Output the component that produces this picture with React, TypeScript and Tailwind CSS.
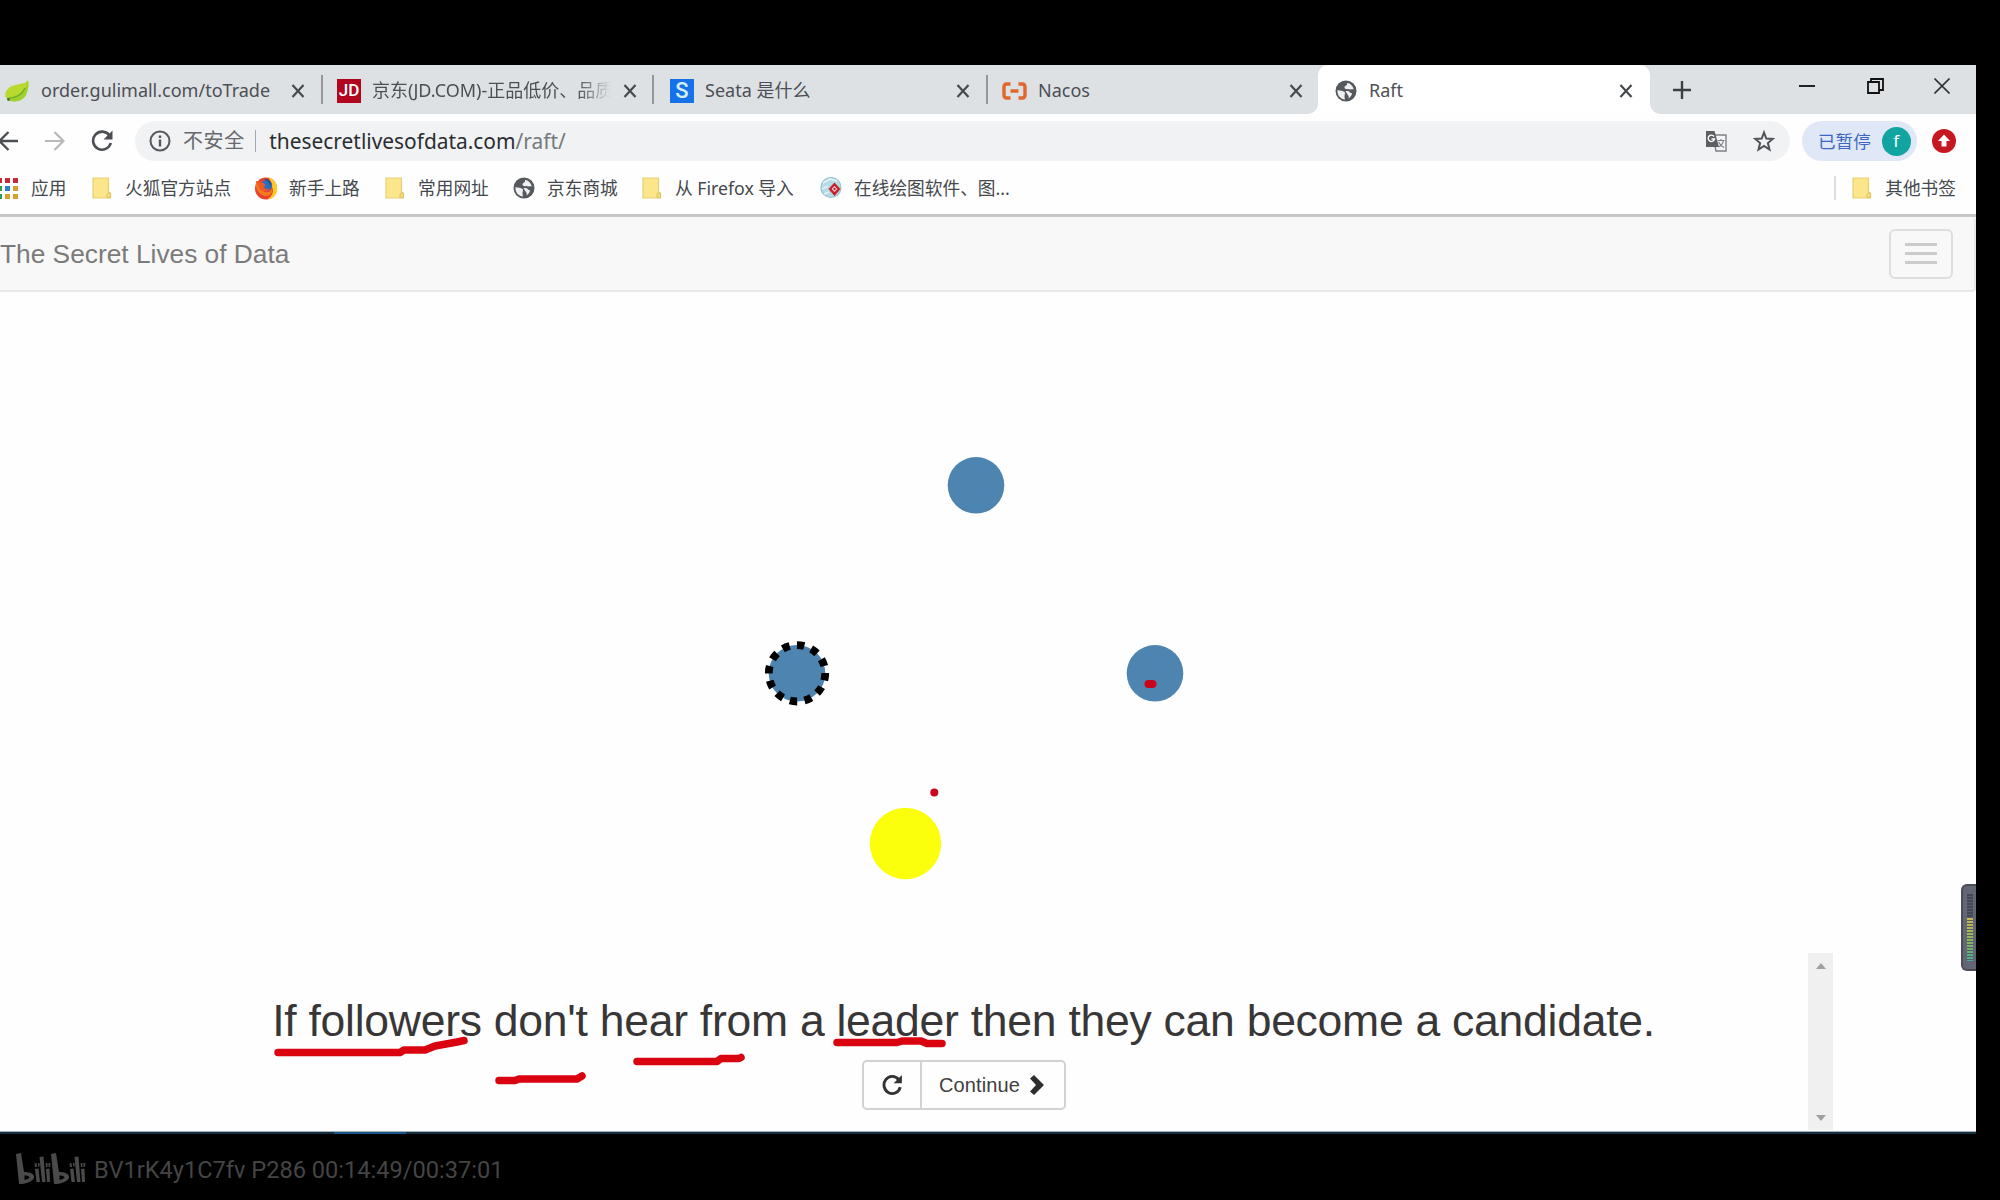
import React from "react";

const cjk = "font-['Noto_Sans','Noto_Sans_CJK_SC',sans-serif]";

function Close({ className = "" }: { className?: string }) {
  return (
    <svg viewBox="0 0 14 14" className={"size-3.5 shrink-0 " + className}>
      <path d="M1.5 1l11 12M12.5 1l-11 12" stroke="#46494d" strokeWidth="2.2" fill="none" />
    </svg>
  );
}

function Leaf() {
  return (
    <svg viewBox="0 0 24 24" className="w-6 h-6 shrink-0">
      <path d="M23 1C20 6 12 4 5 8C-1 12 -1 18 3 21C9 24 18 22 21 16C23 11 24 6 23 1Z" fill="#b9d92f" />
      <path d="M3 21C9 24 18 22 21 16C23 11 24 6 23 1C22 9 18 16 4 18Z" fill="#9fd02f" />
      <path d="M2 19.500C10 19.500 17 16 20 9" stroke="#6ba92b" strokeWidth="1.200" fill="none" />
      <circle cx="3.500" cy="20.500" r="1.400" fill="#3f7a2a" />
    </svg>
  );
}

function Globe({ className = "" }: { className?: string }) {
  return (
    <svg viewBox="0 0 22 22" className={"size-[22px] shrink-0 " + className}>
      <circle cx="11" cy="11" r="10.500" fill="#55595d" />
      <path d="M2.500 10C5 11 8 10.500 9.500 12C11 13.500 8.500 14.500 10 19.500C5 19 2 15 2.500 10Z" fill="#eef0f2" />
      <path d="M12 3C14 2.500 18 5.500 18.800 9.500C17 9 15 10 13.500 9C11 9.500 9 8.500 9.500 7C10 5.500 12.500 6 12 3Z" fill="#eef0f2" />
      <path d="M10.500 11.500C13 10.500 15 11.500 15 13C18 12 17.500 15.500 13.500 18.500C14.500 15.500 12.500 15 12 13.500Z" fill="#eef0f2" />
    </svg>
  );
}

function Folder() {
  return (
    <svg viewBox="0 0 20 22" className="w-5 h-[22px] shrink-0">
      <path d="M1 1H16.500V15L18.500 16V21H1Z" fill="#fce68c" stroke="#e6cf76" strokeWidth="1.200" />
      <path d="M15 20.500V17C15 15.500 18.500 15.500 18.500 17V20.500Z" fill="#f7dc76" stroke="#dcc262" strokeWidth="1" />
    </svg>
  );
}

function Firefox() {
  return (
    <svg viewBox="0 0 24 24" className="size-6 shrink-0">
      <circle cx="12" cy="12.500" r="11" fill="#e8412c" />
      <path d="M14 1C21 3 24 9 23 15C22 20 18 23 13 23.500C19 20 20 15 18 11C19 8 16 4 14 1Z" fill="#ffc928" />
      <path d="M2 5C1 11 4 20 12 20C17 20 19 16 18 12C17 17 12 17 9 15C6 13 6 9 8 7Z" fill="#f5791f" />
      <circle cx="12.500" cy="9.500" r="5.500" fill="#2a6fc0" />
      <path d="M10 3C13 2 18 5 17 11C16 7 13 5 10 3Z" fill="#274b91" />
      <path d="M2 5C4 6 6 6 9 7C12 8 12 10 9.500 11C11 13 14 13 16 13C13 16 7 16 5 12Z" fill="#ee5a24" />
    </svg>
  );
}

function Drawing() {
  return (
    <svg viewBox="0 0 22 24" className="w-[22px] h-6 shrink-0">
      <circle cx="11" cy="11.500" r="10" fill="#b4dbe6" stroke="#9cc3d0" strokeWidth="1.200" />
      <path d="M3 7L10 3L17 5M2 13L8 10M4 18L9 16" stroke="#e4f3f7" strokeWidth="1.500" fill="none" />
      <path d="M14.500 6.500L20.500 13L14.500 20L8.500 13Z" fill="#c9202f" />
      <path d="M14.500 10L17.300 13L14.500 16L11.700 13Z" fill="#f5dfe2" />
      <circle cx="14.500" cy="13" r="1.200" fill="#c9202f" />
    </svg>
  );
}

function Tabs() {
  return (
    <div className="flex h-[49px] bg-[#dee1e4] text-[18px] text-[#4c4f54]">
      <div className="flex w-[321px] items-center pl-[5px] pt-0.5">
        <Leaf />
        <span className="ml-3 w-[238px] whitespace-nowrap">order.gulimall.com/toTrade</span>
        <Close className="ml-3" />
      </div>
      <div className="my-2.5 w-0.5 bg-[#94979a]" />
      <div className="flex w-[329px] items-center pl-3.5 pt-0.5">
        <span className="flex size-6 shrink-0 items-center justify-center bg-[#b1051f] text-[17px] font-medium text-white font-['Roboto',sans-serif]">JD</span>
        <span className="ml-[11px] w-[239px] overflow-hidden whitespace-nowrap [mask-image:linear-gradient(to_right,black_86%,transparent)]">京东(JD.COM)-正品低价、品质</span>
        <Close className="ml-3" />
      </div>
      <div className="my-2.5 w-0.5 bg-[#94979a]" />
      <div className="flex w-[332px] items-center pl-4 pt-0.5">
        <span className="flex size-6 shrink-0 items-center justify-center bg-[#1672e8] text-[22px] font-medium text-[#d6efff] font-['Roboto',sans-serif]">S</span>
        <span className="ml-[11px] w-[239px] whitespace-nowrap">Seata 是什么</span>
        <Close className="ml-3" />
      </div>
      <div className="my-2.5 w-0.5 bg-[#94979a]" />
      <div className="flex w-[330px] items-center pl-3.5 pt-0.5">
        <svg viewBox="0 0 25 18" className="h-[18px] w-[25px] shrink-0">
          <path d="M8.500 2H5Q2 2 2 5V13Q2 16 5 16H8.500M16.500 2H20Q23 2 23 5V13Q23 16 20 16H16.500M8.500 9H16.500" fill="none" stroke="#e0682c" strokeWidth="3.400" />
        </svg>
        <span className="ml-[11px] w-[238px] whitespace-nowrap">Nacos</span>
        <Close className="ml-[13px]" />
      </div>
      <div className="relative flex w-[332px] items-center rounded-t-[10px] bg-white pl-[17px] pt-0.5">
        <div className="absolute -left-2.5 bottom-0 size-2.5 bg-[radial-gradient(circle_at_0_0,transparent_9.500px,white_10px)]" />
        <div className="absolute -right-2.5 bottom-0 size-2.5 bg-[radial-gradient(circle_at_100%_0,transparent_9.500px,white_10px)]" />
        <Globe />
        <span className="ml-3 w-[238px]">Raft</span>
        <Close className="ml-3" />
      </div>
      <div className="flex flex-1 items-center">
        <svg viewBox="0 0 18 18" className="ml-[23px] size-[18px]">
          <path d="M9 0V18M0 9H18" stroke="#3c4043" strokeWidth="2.400" />
        </svg>
        <svg viewBox="0 0 16 2" className="mb-2 ml-[108px] h-1 w-4">
          <path d="M0 1H16" stroke="#222" strokeWidth="2" />
        </svg>
        <svg viewBox="0 0 17 16" className="mb-[7px] ml-[52px] h-4 w-[17px]">
          <path d="M1 4H12V15H1ZM4 4V1H16V12H12" fill="none" stroke="#111" strokeWidth="1.800" />
        </svg>
        <svg viewBox="0 0 16 16" className="mb-[7px] ml-[50px] size-4">
          <path d="M.5.5l15 15M15.500.5l-15 15" stroke="#333" strokeWidth="1.600" />
        </svg>
      </div>
    </div>
  );
}

function Toolbar() {
  return (
    <div className="flex h-[54px] items-center text-[#5f6368]">
      <svg viewBox="0 0 20 20" className="-ml-0.5 h-5 w-5">
        <path d="M20 10H2M10.500 1L1.500 10L10.500 19" fill="none" stroke="#4b4e52" strokeWidth="2.300" />
      </svg>
      <svg viewBox="0 0 20 20" className="ml-[27px] size-5">
        <path d="M0 10H18M9.500 1L18.500 10L9.500 19" fill="none" stroke="#b6b8ba" strokeWidth="2.200" />
      </svg>
      <svg viewBox="0 0 22 22" className="ml-[26px] size-[22px]">
        <path d="M18.500 5.500A9 9 0 1 0 19.800 13" fill="none" stroke="#4b4e52" strokeWidth="2.600" />
        <path d="M21.500.5V9.500H12.500Z" fill="#4b4e52" />
      </svg>
      <div className="ml-[22px] flex h-10 w-[1655px] items-center rounded-full bg-[#f0f2f4] pl-[14px]">
        <svg viewBox="0 0 22 22" className="size-[22px]">
          <circle cx="11" cy="11" r="9.500" fill="none" stroke="#55595d" strokeWidth="2" />
          <path d="M11 9.500V16.500M11 5.500V8" stroke="#55595d" strokeWidth="2.400" />
        </svg>
        <span className="ml-3 text-[20px] tracking-[.6px] text-[#66696d]">不安全</span>
        <span className="ml-2.5 h-[22px] w-[1.500px] bg-[#a6a8aa]" />
        <span className="ml-[13px] text-[20.900px] leading-7 text-[#2b2e31]">thesecretlivesofdata.com<span className="text-[#75797d]">/raft/</span></span>
        <svg viewBox="0 0 22 22" className="ml-auto mr-[26px] size-[22px]">
          <path d="M8 5H21V21H11Z" fill="#f4f5f6" stroke="#7c8084" strokeWidth="1.400" />
          <path d="M1 1H9.500L14 17H1Z" fill="#5c6064" />
          <path d="M9 6.500A3.200 3.200 0 1 0 9.500 9H6.500" fill="none" stroke="#fff" strokeWidth="1.400" />
          <path d="M12.500 10.500H19.500M16 9V10.500M18.500 10.500C18 13.500 15.500 16 13.500 17M13.500 12C15 15 17 16.500 19 17.500" fill="none" stroke="#7c8084" strokeWidth="1.200" />
        </svg>
        <svg viewBox="0 0 22 22" className="mr-[15px] size-[22px]">
          <path d="M11 2.500L13.300 8.500L19.800 8.900L14.900 13L16.500 19.500L11 16L5.500 19.500L7.100 13L2.200 8.900L8.700 8.500Z" fill="none" stroke="#505458" strokeWidth="2" />
        </svg>
      </div>
      <div className="ml-3 flex h-10 w-[115px] items-center rounded-full bg-[#e0e8f7] pl-4">
        <span className="text-[17.600px] text-[#3c66c4]">已暂停</span>
        <span className="ml-[11px] flex size-[29px] items-center justify-center rounded-full bg-[#12a4a0] text-[17px] text-white">f</span>
      </div>
      <svg viewBox="0 0 24 24" className="ml-[15px] size-6">
        <circle cx="12" cy="12" r="12" fill="#c5191f" />
        <path d="M12 5.500L18 12H14.500V17.500H9.500V12H6Z" fill="#fff" />
      </svg>
    </div>
  );
}

function Bookmark({ icon, label, className }: { icon: React.ReactNode; label: string; className: string }) {
  return (
    <div className={"flex shrink-0 items-center whitespace-nowrap " + className}>
      {icon}
      <span>{label}</span>
    </div>
  );
}

function Bookmarks() {
  const colors = ["#c5283a", "#c5283a", "#c5283a", "#2f9a5a", "#2f7fd0", "#d9a030", "#2f9a5a", "#d9a030", "#d9a030"];
  return (
    <div className="flex h-[46px] items-center pb-1.5 text-[17.700px] text-[#45484c]">
      <div className="-ml-[3px] grid grid-cols-3 gap-x-[3px] gap-y-[3px]">
        {colors.map((c, i) => (
          <span key={i} className="size-[5px]" style={{ backgroundColor: c }} />
        ))}
      </div>
      <span className="ml-[13px] w-[61px]">应用</span>
      <Bookmark className="w-[162px] gap-[13px]" icon={<Folder />} label="火狐官方站点" />
      <Bookmark className="w-[131px] gap-[11px]" icon={<Firefox />} label="新手上路" />
      <Bookmark className="w-[128px] gap-[13px]" icon={<Folder />} label="常用网址" />
      <Bookmark className="w-[129px] gap-3" icon={<Globe />} label="京东商城" />
      <Bookmark className="w-[178px] gap-[13px]" icon={<Folder />} label="从 Firefox 导入" />
      <Bookmark className="w-[200px] gap-3" icon={<Drawing />} label="在线绘图软件、图..." />
      <span className="ml-auto mr-4 h-6 w-0.5 bg-[#dcdee0]" />
      <Bookmark className="mr-5 gap-[13px]" icon={<Folder />} label="其他书签" />
    </div>
  );
}

function Cluster() {
  return (
    <svg viewBox="0 292 1976 661" className="h-[661px] w-[1976px]">
      <g fill="#4d84b0">
        <circle cx="976" cy="485.300" r="28.300" />
        <circle cx="797" cy="673.300" r="28.300" />
        <circle cx="1155" cy="673.300" r="28.300" />
      </g>
      <circle cx="797" cy="673.300" r="28.200" fill="none" stroke="#000" strokeWidth="7.800" strokeDasharray="7.400 7.365" transform="rotate(-.5 797 673.300)" />
      <circle cx="905.500" cy="843.500" r="35.700" fill="#fcff0b" />
      <circle cx="934.300" cy="792.500" r="4" fill="#c8051a" />
      <path d="M1148.500 684H1152.500" stroke="#c8051a" strokeWidth="8" strokeLinecap="round" />
    </svg>
  );
}

function Ink() {
  return (
    <svg viewBox="260 1020 700 70" className="absolute left-[259px] top-[66px] h-[70px] w-[700px]">
      <g fill="none" stroke="#da0310" strokeWidth="7.500" strokeLinecap="round" strokeLinejoin="round">
        <path d="M279 1053.500H401L405 1051H426L436 1047L447 1045L458 1043L465 1041.500" />
        <path d="M500 1081.500H516L520 1080H578L583 1077" />
        <path d="M638 1062.500H718L722 1059.500H740L742 1058.500" />
        <path d="M838 1043.500H898L903 1042H922L928 1044.500H943" />
      </g>
    </svg>
  );
}

function BiliHalf() {
  return (
    <>
      <path d="M0 1L5 0L8 19C14 19 19 21 18 25C16 29 9 31 3 31ZM8.500 22.500L8.500 27C11 26.500 13 25.500 13.500 24.500C13 23 11 22.500 8.500 22.500Z" fillRule="evenodd" />
      <path d="M19 16L22.500 15.500L24 29H20.500ZM23.500 4L27.500 3.500L29.500 29H26ZM30 16L33.500 15.500L34 29H31Z" />
      <path d="M18.500 10.500L20.500 10L21 14H19ZM22 10L23.500 10V13.500H22ZM29.500 10H31.500V14H30ZM32.500 10H34.500L34 14H32.500Z" />
    </>
  );
}

export default function App() {
  return (
    <div className={"flex h-[1200px] w-[2000px] flex-col overflow-hidden bg-black pt-[65px] " + cjk}>
      <div className="relative flex h-[1069px] w-[1976px] flex-col bg-[#fefefe]">
        <Tabs />
        <Toolbar />
        <Bookmarks />
        <div className="h-[3px] bg-[#c6c7c8]" />
        <nav className="flex h-[75px] shrink-0 items-center justify-between rounded-r border-b-2 border-r-2 border-[#e8e8e8] bg-[#f8f8f8] pr-[21px] font-['Liberation_Sans',sans-serif]">
          <span className="pt-0.5 text-[26.300px] text-[#7b7b7b]">The Secret Lives of Data</span>
          <div className="flex h-[50px] w-16 flex-col items-center justify-center gap-1.5 rounded-md border-2 border-[#dedede]">
            <span className="h-[3px] w-8 bg-[#cbcbcb]" />
            <span className="h-[3px] w-8 bg-[#cbcbcb]" />
            <span className="h-[3px] w-8 bg-[#cbcbcb]" />
          </div>
        </nav>
        <Cluster />
        <div className="relative flex h-[178px] shrink-0 font-['Liberation_Sans',sans-serif]">
          <div className="flex w-[1808px] flex-col items-center pl-[119px] pt-[42px]">
            <h1 className="whitespace-nowrap text-[44.500px] leading-[52px] tracking-[-.26px] text-[#383636]">If followers don't hear from a leader then they can become a candidate.</h1>
            <div className="mt-[13px] flex h-[50px] w-[204px] rounded-[5px] border-2 border-[#d2d2d2] text-[20px] text-[#404040]">
              <div className="flex w-[58px] items-center justify-center border-r-2 border-[#d2d2d2]">
                <svg viewBox="0 0 20 20" className="size-[22px]">
                  <path d="M16 5A7.500 7.800 0 1 0 17.500 12" fill="none" stroke="#333" strokeWidth="2.600" />
                  <path d="M19 1V8.500H11.500Z" fill="#333" />
                </svg>
              </div>
              <div className="flex flex-1 items-center justify-center gap-2.5 pr-0.5">
                <span className="tracking-[.1px]">Continue</span>
                <svg viewBox="0 0 14 20" className="h-5 w-3.5">
                  <path d="M0 3.500L4 0L14 10L4 20L0 16.500L6 10Z" fill="#2e2e2e" />
                </svg>
              </div>
            </div>
          </div>
          <div className="flex h-[177px] w-[25px] flex-col items-center justify-between bg-[#f0f0f0] pb-[9px] pt-2.5">
            <svg viewBox="0 0 10 6" className="h-1.5 w-2.5"><path d="M0 6L5 0L10 6Z" fill="#a0a0a0" /></svg>
            <svg viewBox="0 0 10 6" className="h-1.5 w-2.5"><path d="M0 0L5 6L10 0Z" fill="#a0a0a0" /></svg>
          </div>
          <Ink />
        </div>
        <div className="flex h-[3px] border-t border-[#9fb0b8] bg-[#17303f]">
          <div className="ml-[334px] w-[72px] bg-[#17558a]" />
        </div>
        <div className="absolute right-0 top-[819px] flex h-[87px] w-[15px] rounded-l-md border-y-2 border-l-2 border-[#4a4c57] bg-[#636675] py-2 pl-1">
          <div className="flex w-1.5 flex-col">
            <div className="h-6 bg-[repeating-linear-gradient(#444754_0_2px,#5a5d6b_2px_3px)]" />
            <div className="h-11 bg-[repeating-linear-gradient(transparent_0_2px,#555e60_2px_3px),linear-gradient(#ccb84e,#8fb557_50%,#48ad95)]" />
          </div>
        </div>
      </div>
      <footer className="flex h-[66px] items-center pl-4 pt-2 text-[#454545] font-['Roboto',sans-serif]">
        <svg viewBox="0 0 70 32" className="-mt-1 h-8 w-[70px]" fill="#4a4a4a">
          <BiliHalf />
          <g transform="translate(35 0)">
            <BiliHalf />
          </g>
        </svg>
        <span className="ml-2 text-[23.600px]">BV1rK4y1C7fv P286 00:14:49/00:37:01</span>
      </footer>
    </div>
  );
}
